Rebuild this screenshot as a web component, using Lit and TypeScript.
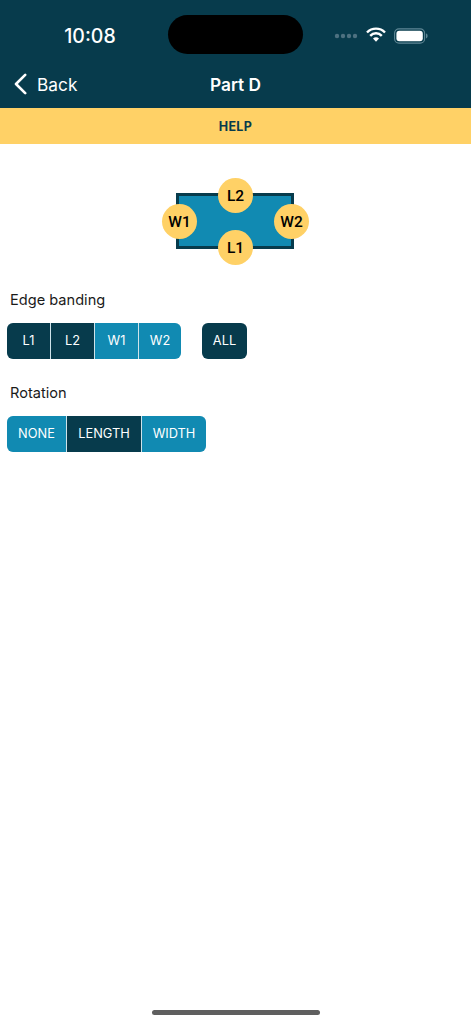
import { LitElement, html, css } from "lit";
import { customElement } from "lit/decorators.js";

@customElement("app-root")
export class AppRoot extends LitElement {
  static styles = css`
    :host { display: block; width: 471px; height: 1024px; background: #fff; position: relative; overflow: hidden; font-family: Inter, "Liberation Sans", sans-serif; color: #1a1a1a; }
    .header { background: #073b4c; height: 108px; color: #fff; display: flex; flex-direction: column; box-sizing: border-box; padding-top: 15px; }
    .status { display: grid; grid-template-columns: 168px 135px 168px; height: 39px; }
    .time { font-size: 19.5px; font-weight: 500; display: flex; align-items: center; justify-content: center; padding: 2px 0 0 12px; }
    .island { background: #000; border-radius: 20px; }
    .right { display: flex; align-items: center; padding: 2px 0 0 31px; gap: 8px; }
    .right svg { display: block; }
    .wifi { margin: -3px 0 0 0; }
    .nav { display: grid; grid-template-columns: 1fr auto 1fr; align-items: center; margin-top: 12px; height: 37px; }
    .back { display: flex; align-items: center; gap: 10px; padding-left: 14px; font-size: 17.3px; font-weight: 400; }
    .chev { margin-top: -2px; }
    .title { font-size: 17.3px; font-weight: 600; }
    .help { background: #ffd166; height: 36px; display: flex; align-items: center; justify-content: center; color: #073b4c; font-size: 12.5px; font-weight: 700; letter-spacing: 0.4px; }
    .diagram { position: relative; width: 147px; height: 87px; margin: 34px 0 0 162px; }
    .rect { position: absolute; left: 14px; top: 15px; width: 117.5px; height: 55.5px; box-sizing: border-box; background: #118ab2; border: 3px solid #073b4c; }
    .dot { position: absolute; width: 35px; height: 35px; border-radius: 50%; background: #ffd166; color: #000; display: flex; align-items: center; justify-content: center; font-family: Roboto, sans-serif; font-size: 15.5px; font-weight: 500; }
    .l2 { left: 56px; top: 0; }
    .l1 { left: 56px; top: 52px; }
    .w1 { left: 0; top: 26px; }
    .w2 { left: 112px; top: 26px; }
    .label { font-size: 14.6px; line-height: 20px; padding-left: 10px; }
    .edge-label { margin-top: 25px; }
    .rot-label { margin-top: 24px; }
    .row { display: flex; margin: 12.5px 0 0 7px; }
    .group { display: flex; border-radius: 6px; overflow: hidden; gap: 1px; background: #cfe3ea; }
    .btn { height: 36.5px; display: flex; align-items: center; justify-content: center; color: #fff; font-size: 12.8px; box-sizing: border-box; }
    .dark { background: #073b4c; }
    .blue { background: #118ab2; }
    .edge { width: 43px; }
    .edge-last { width: 42px; }
    .none { width: 59px; }
    .length { width: 74px; }
    .width { width: 64px; }
    .all { width: 45px; margin-left: 21px; border-radius: 6px; }
    .home { position: absolute; left: 152px; top: 1010px; width: 168px; height: 5px; border-radius: 3px; background: #5f5f5f; }
  `;

  render() {
    return html`
      <div class="header">
        <div class="status">
          <div class="time">10:08</div>
          <div class="island"></div>
          <div class="right">
            <svg width="24" height="6" viewBox="0 0 24 6"><g fill="#4d7180"><circle cx="3" cy="3" r="2.2"/><circle cx="9" cy="3" r="2.2"/><circle cx="15" cy="3" r="2.2"/><circle cx="21" cy="3" r="2.2"/></g></svg>
            <svg class="wifi" width="20" height="15" viewBox="0 0 20 15"><g fill="none" stroke="#fff" stroke-width="2.4"><path d="M1 5.5a12.5 12.5 0 0 1 18 0"/><path d="M4.2 8.8a8 8 0 0 1 11.6 0"/></g><path d="M7 11.6a4.2 4.2 0 0 1 6 0L10 14.8z" fill="#fff"/></svg>
            <svg class="battery" width="34" height="16" viewBox="0 0 34 16"><rect x="0.6" y="0.9" width="30" height="14.2" rx="4.4" fill="none" stroke="#5f8795" stroke-width="1.1"/><rect x="2.4" y="2.7" width="26.4" height="10.6" rx="3" fill="#fff"/><path d="M32 5.6c1 .3 1.6 1.2 1.6 2.4s-.6 2.1-1.6 2.4z" fill="#5f8795"/></svg>
          </div>
        </div>
        <div class="nav">
          <div class="back">
            <svg class="chev" width="13" height="22" viewBox="0 0 13 22"><path d="M11.2 1.8 2 11l9.2 9.2" fill="none" stroke="#fff" stroke-width="2.6" stroke-linecap="round" stroke-linejoin="round"/></svg>
            <span>Back</span>
          </div>
          <div class="title">Part D</div>
          <div></div>
        </div>
      </div>
      <div class="help">HELP</div>
      <div class="diagram">
        <div class="rect"></div>
        <div class="dot l2">L2</div>
        <div class="dot l1">L1</div>
        <div class="dot w1">W1</div>
        <div class="dot w2">W2</div>
      </div>
      <div class="label edge-label">Edge banding</div>
      <div class="row">
        <div class="group">
          <div class="btn dark edge">L1</div>
          <div class="btn dark edge">L2</div>
          <div class="btn blue edge">W1</div>
          <div class="btn blue edge-last">W2</div>
        </div>
        <div class="btn dark all">ALL</div>
      </div>
      <div class="label rot-label">Rotation</div>
      <div class="row">
        <div class="group">
          <div class="btn blue none">NONE</div>
          <div class="btn dark length">LENGTH</div>
          <div class="btn blue width">WIDTH</div>
        </div>
      </div>
      <div class="home"></div>
    `;
  }
}
